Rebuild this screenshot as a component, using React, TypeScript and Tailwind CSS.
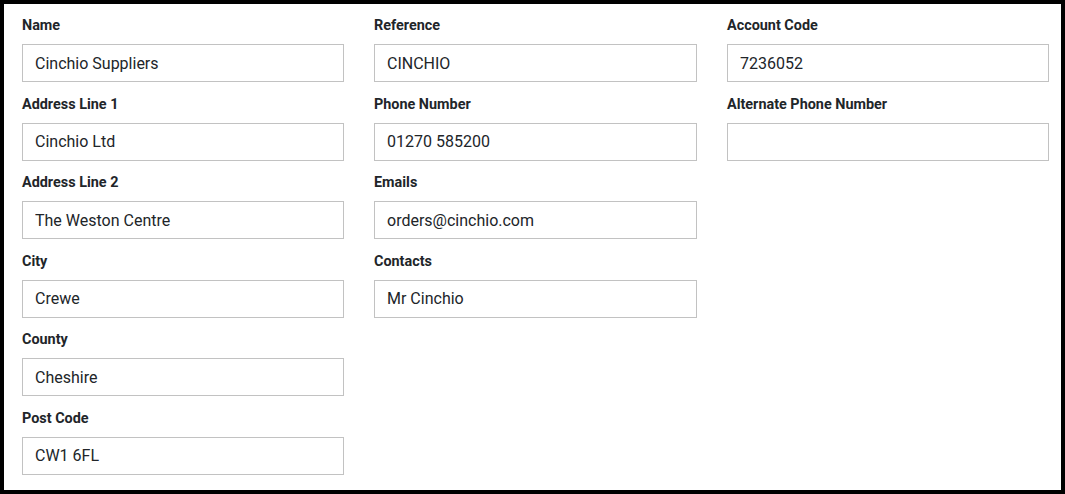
type Field = { label: string; value: string };

const columns: Field[][] = [
  [
    { label: 'Name', value: 'Cinchio Suppliers' },
    { label: 'Address Line 1', value: 'Cinchio Ltd' },
    { label: 'Address Line 2', value: 'The Weston Centre' },
    { label: 'City', value: 'Crewe' },
    { label: 'County', value: 'Cheshire' },
    { label: 'Post Code', value: 'CW1 6FL' },
  ],
  [
    { label: 'Reference', value: 'CINCHIO' },
    { label: 'Phone Number', value: '01270 585200' },
    { label: 'Emails', value: 'orders@cinchio.com' },
    { label: 'Contacts', value: 'Mr Cinchio' },
  ],
  [
    { label: 'Account Code', value: '7236052' },
    { label: 'Alternate Phone Number', value: '' },
  ],
];

function FormField({ label, value }: Field) {
  return (
    <div className="flex flex-col">
      <label className="mb-2 text-[14.4px] font-bold leading-[21px] text-[#212529]">{label}</label>
      <input
        readOnly
        value={value}
        className="h-[38px] w-full border border-[#c2c2c2] bg-white px-3 text-[16px] text-[#212529] outline-none"
      />
    </div>
  );
}

export default function App() {
  return (
    <div
      className="h-[494px] w-[1065px] border-4 border-black bg-white pl-[18px] pr-[12px] pt-[11px]"
      style={{ fontFamily: 'Roboto, "Liberation Sans", sans-serif' }}
    >
      <div className="grid grid-cols-[322px_323px_322px] gap-x-[30px]">
        {columns.map((fields, i) => (
          <div key={i} className="flex flex-col gap-y-[11.6px]">
            {fields.map((f) => (
              <FormField key={f.label} {...f} />
            ))}
          </div>
        ))}
      </div>
    </div>
  );
}
